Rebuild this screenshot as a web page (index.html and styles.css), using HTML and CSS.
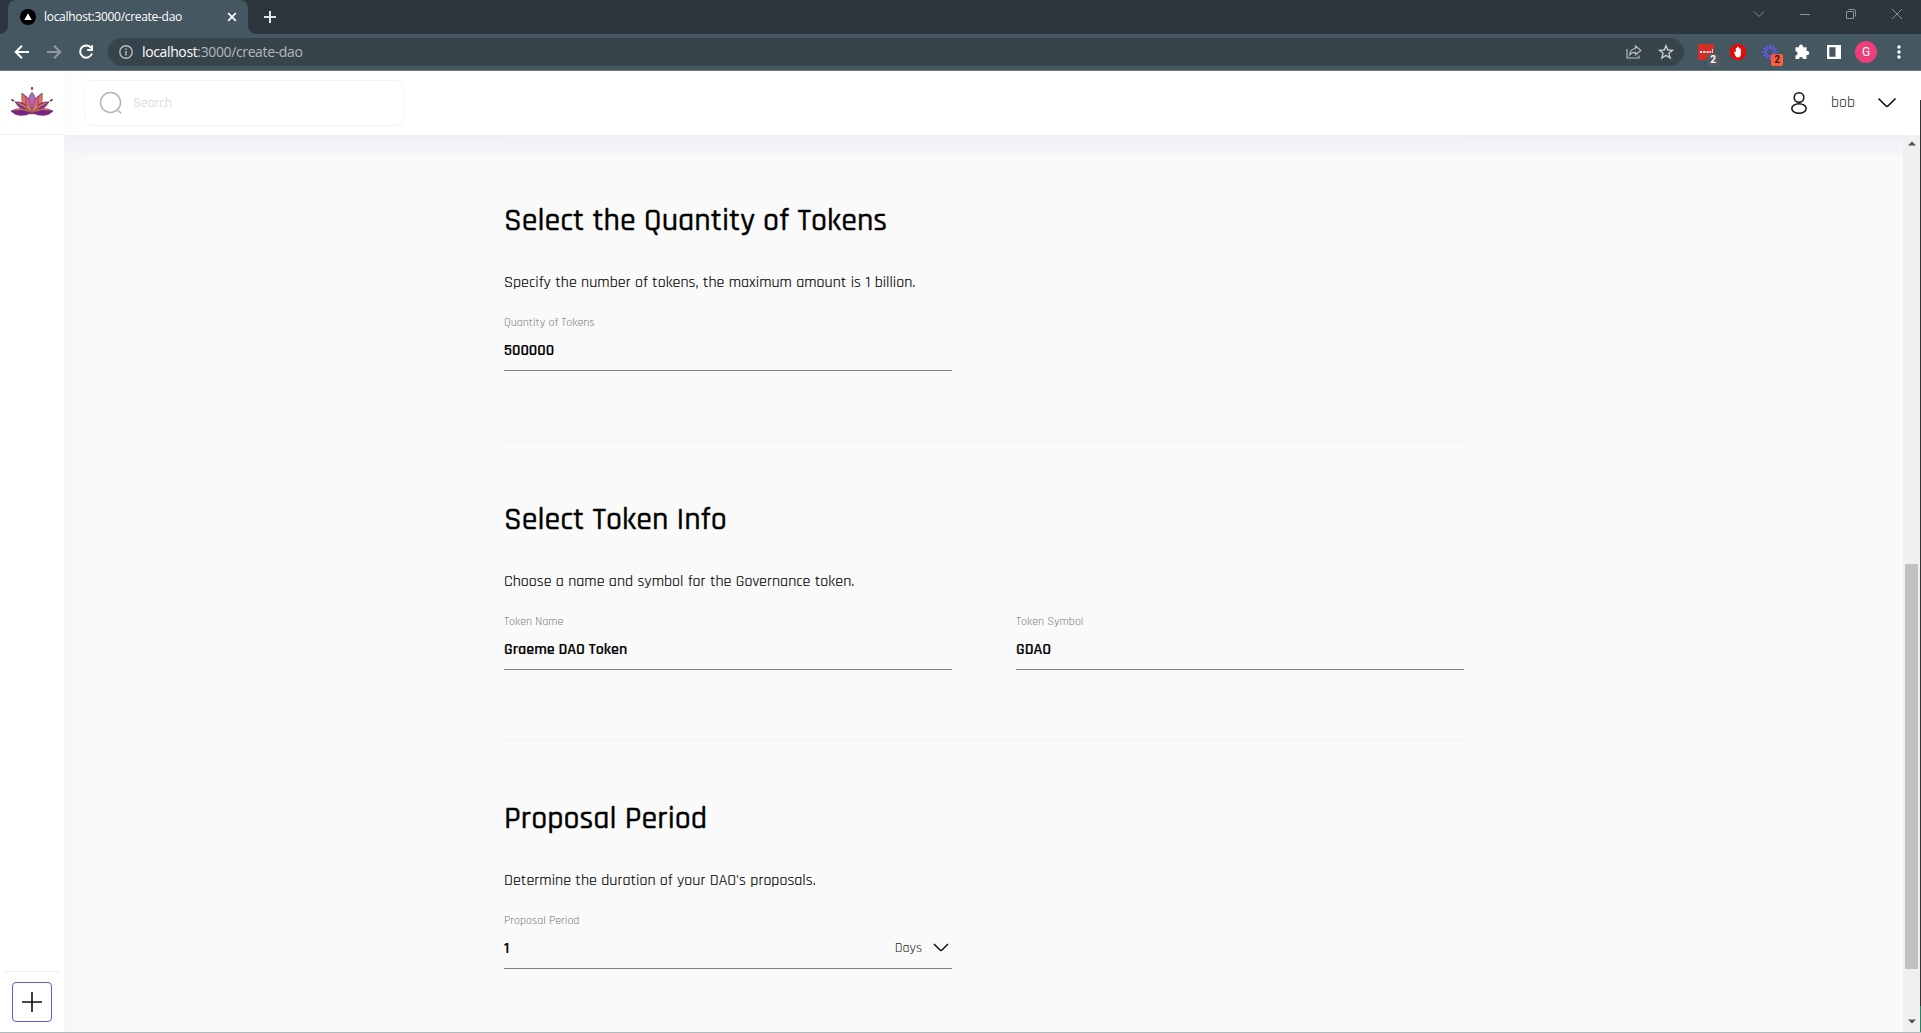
FILE: index.html
```html
<!DOCTYPE html>
<html lang="en">
<head>
<meta charset="utf-8">
<title>Create DAO</title>
<link rel="stylesheet" href="styles.css">
</head>
<body>
<div class="window">
  <div class="tabstrip">
    <div class="tab">
      <svg class="favicon" width="16" height="16" viewBox="0 0 16 16"><circle cx="8" cy="8" r="8" fill="#000"/><path d="M8 4.2 11.7 11H4.3Z" fill="#fff"/></svg>
      <span class="tab-title">localhost:3000/create-dao</span>
      <svg width="10" height="10" viewBox="0 0 10 10"><path d="M1.2 1.2 8.8 8.8M8.8 1.2 1.2 8.8" stroke="#fff" stroke-width="1.7"/></svg>
    </div>
    <svg class="new-tab" width="12" height="12" viewBox="0 0 12 12"><path d="M6 0V12M0 6H12" stroke="#e1e4e5" stroke-width="2"/></svg>
    <div class="window-controls">
      <svg width="12" height="12" viewBox="0 0 12 12"><path d="M1 3.5 6 8.5 11 3.5"/></svg>
      <svg width="12" height="12" viewBox="0 0 12 12"><path d="M1 6.5H11"/></svg>
      <svg width="12" height="12" viewBox="0 0 12 12"><path d="M1.500 3.500H8.500V10.500H1.500ZM3.500 1.500H9Q10.500 1.500 10.500 3V8.500"/></svg>
      <svg width="12" height="12" viewBox="0 0 12 12"><path d="M1 1 11 11M11 1 1 11"/></svg>
    </div>
  </div>
  <div class="toolbar">
    <div class="nav">
      <svg width="16" height="16" viewBox="0 0 16 16"><path d="M15 8H2.500M8 1.700 1.700 8 8 14.300" stroke="#fff"/></svg>
      <svg width="16" height="16" viewBox="0 0 16 16"><path d="M1 8H13.500M8 1.700 14.300 8 8 14.300" stroke="#8f9a9f"/></svg>
      <svg width="16" height="16" viewBox="0 0 16 16"><path d="M13.200 4A6.100 6.100 0 1 0 14 9.500M14 1.200V6H9.200" stroke="#fff"/></svg>
    </div>
    <div class="omnibox">
      <svg width="14" height="14" viewBox="0 0 14 14" fill="none" stroke="#b9bfc2" stroke-width="1.400"><circle cx="7" cy="7" r="6.200"/><path d="M7 6V10.500M7 3.500V5"/></svg>
      <span class="url"><b>localhost</b>:3000/create-dao</span>
      <svg class="share" width="16" height="16" viewBox="0 0 16 16" fill="none" stroke="#b9bfc2" stroke-width="1.200"><path d="M1 5V14H13V11.500M9.500 2 14.800 6.400 9.500 10.800V8.300Q5.500 8.200 3.700 11 4 5 9.500 4.500Z"/></svg>
      <svg width="16" height="16" viewBox="0 0 16 16" fill="none" stroke="#c8cdcf" stroke-width="1.400"><path d="M8 1.700 9.800 6 14.500 6.300 10.900 9.300 12.100 14 8 11.400 3.900 14 5.100 9.300 1.500 6.300 6.200 6Z"/></svg>
    </div>
    <div class="extensions">
      <span class="ext"><svg width="16" height="16" viewBox="0 0 16 16"><rect width="16" height="16" rx="1" fill="#d32d27"/><path d="M2 7H4V9H2ZM5.300 7H7.300V9H5.300ZM8.600 7H10.600V9H8.600ZM11.700 7H13.200V9H11.700ZM14.200 5H15V9H14.200Z" fill="#fff"/></svg><i class="badge badge-dark">2</i></span>
      <span class="ext"><svg width="16" height="16" viewBox="0 0 16 16"><path d="M4.700 0H11.300L16 4.700V11.300L11.300 16H4.700L0 11.300V4.700Z" fill="#e40d0d"/><path d="M4 8 5 7.500 5.800 8.500V4.200Q6.500 3.500 7 4.200V2.900Q7.600 2.200 8.200 2.900V3.600Q8.900 2.900 9.400 3.700V4.700Q10.400 4.200 10.900 5V10.500Q10.600 13.500 8 13.500 6 13.500 5.200 11.500Z" fill="#fff"/></svg></span>
      <span class="ext"><svg width="16" height="16" viewBox="0 0 16 16"><g stroke="#6259ee" stroke-width="1.500"><path d="M8 0V5M8 11V16M0 8H5M11 8H16M4 1.100 6.500 5.400M9.500 10.600 12 14.900M12 1.100 9.500 5.400M6.500 10.600 4 14.900M1.100 4 5.400 6.500M10.600 9.500 14.900 12M14.900 4 10.600 6.500M5.400 9.500 1.100 12"/></g></svg><i class="badge badge-orange">2</i></span>
      <span class="ext"><svg width="16" height="16" viewBox="0 0 16 16"><path d="M1.500 3.300H5A2.100 2.100 0 1 1 9 3.300H12.500V7A2.100 2.100 0 1 1 12.500 11V15H9A2 2 0 0 0 5 15H1.500V11.500A2 2 0 0 0 1.500 7.300Z" fill="#fff"/></svg></span>
      <span class="ext"><svg width="16" height="16" viewBox="0 0 16 16"><path d="M1 1H15V15H1ZM3.300 3.300V12.700H9.500V3.300Z" fill="#fff" fill-rule="evenodd"/></svg></span>
      <span class="avatar">G</span>
      <svg width="4" height="14" viewBox="0 0 4 14" fill="#fff"><circle cx="2" cy="2" r="1.700"/><circle cx="2" cy="7" r="1.700"/><circle cx="2" cy="12" r="1.700"/></svg>
    </div>
  </div>
  <div class="app">
    <aside class="sidebar">
      <div class="logo">
        <svg width="44" height="30" viewBox="0 0 44 30" stroke="#55305d" stroke-width=".4">
          <path d="M22 27Q10 20 12 6 21 11 22 27ZM22 27Q34 20 32 6 23 11 22 27Z" fill="#a84f95"/>
          <path d="M12 6Q19 13 18 22L12 17ZM32 6Q25 13 26 22L32 17Z" fill="#ee735d"/>
          <path d="M22 27Q13 15 22 5 31 15 22 27Z" fill="#a96bb3"/>
          <path d="M22 27Q13 17 16 9 22 16 22 27ZM22 27Q31 17 28 9 22 16 22 27Z" fill="#d4607c"/>
          <path d="M22 27Q10 24 5 15 16 13 22 27ZM22 27Q34 24 39 15 28 13 22 27Z" fill="#853799"/>
          <path d="M22 27Q15 15 5 15L14 20ZM22 27Q29 15 39 15L30 20Z" fill="#f07a55"/>
          <path d="M22 26Q8 32 1 24 12 19 22 26ZM22 26Q36 32 43 24 32 19 22 26Z" fill="#792588"/>
          <path d="M22 26Q12 18 1 24L12 23ZM22 26Q32 18 43 24L32 23Z" fill="#f4774f"/>
          <path d="M22 27Q17 20 15 17 21 18 22 27ZM22 27Q27 20 29 17 23 18 22 27Z" fill="#f39a52"/>
          <path d="M22 0V3M1.500 12.500 4 14.200M42.500 12.500 40 14.200" stroke="#6b3350" stroke-width="1.600"/>
        </svg>
      </div>
      <div class="sidebar-foot">
        <div class="add"><svg width="20" height="20" viewBox="0 0 20 20"><path d="M10 0V20M0 10H20" stroke="#111" stroke-width="1.600"/></svg></div>
      </div>
    </aside>
    <div class="page">
      <header class="header">
        <div class="search">
          <svg width="24" height="24" viewBox="0 0 24 24" fill="none" stroke="#b3b3b3" stroke-width="1.500"><circle cx="11.500" cy="11.500" r="10"/><path d="M19 19.500 22 22.300"/></svg>
          <span>Search</span>
        </div>
        <div class="account">
          <svg width="18" height="24" viewBox="0 0 18 24" fill="none" stroke="#111" stroke-width="1.500"><circle cx="9" cy="6.500" r="4.800"/><ellipse cx="9" cy="17.500" rx="7.200" ry="4.700"/></svg>
          <span class="username">bob</span>
          <svg width="20" height="12" viewBox="0 0 20 12" fill="none" stroke="#111" stroke-width="1.600"><path d="M1.500 1.500 8.800 8.800Q10 10 11.200 8.800L18.500 1.500"/></svg>
        </div>
      </header>
      <div class="scroller">
        <main class="content">
          <section>
            <h2>Select the Quantity of Tokens</h2>
            <p>Specify the number of tokens, the maximum amount is 1 billion.</p>
            <div class="fields">
              <div class="field"><label>Quantity of Tokens</label><div class="value">500000</div></div>
            </div>
          </section>
          <section>
            <h2>Select Token Info</h2>
            <p>Choose a name and symbol for the Governance token.</p>
            <div class="fields">
              <div class="field"><label>Token Name</label><div class="value">Graeme DAO Token</div></div>
              <div class="field"><label>Token Symbol</label><div class="value">GDAO</div></div>
            </div>
          </section>
          <section>
            <h2>Proposal Period</h2>
            <p>Determine the duration of your DAO's proposals.</p>
            <div class="fields">
              <div class="field"><label>Proposal Period</label><div class="value"><span>1</span>
                <div class="unit"><span>Days</span><svg width="16" height="10" viewBox="0 0 16 10" fill="none" stroke="#111" stroke-width="1.500"><path d="M1 1 7 7Q8 8 9 7L15 1"/></svg></div></div></div>
            </div>
          </section>
        </main>
        <div class="scrollbar">
          <svg width="8" height="5" viewBox="0 0 8 5"><path d="M0 4.500 4 .5 8 4.500Z" fill="#505050"/></svg>
          <div class="thumb"></div>
          <svg width="8" height="5" viewBox="0 0 8 5"><path d="M0 .5 4 4.500 8 .5Z" fill="#505050"/></svg>
        </div>
      </div>
    </div>
    <div class="edge"></div>
  </div>
</div>
</body>
</html>
```
FILE: styles.css
```css
* { box-sizing: border-box; }
body { margin: 0; background: #fafafa; font-family: Rajdhani, Roboto, "Liberation Sans", sans-serif; color: #000; }
svg { display: block; flex: none; }
.window { width: 1921px; height: 1033px; display: flex; flex-direction: column; overflow: hidden; border-bottom: 1px solid #aeb9bd; }

.tabstrip { height: 34px; flex: none; display: flex; align-items: center; background: #2c373d; padding-left: 8px; }
.tab { position: relative; width: 240px; height: 34px; display: flex; align-items: center; padding: 0 11px 0 12px; background: #455760; border-radius: 8px 8px 0 0; color: #fff; }
.tab::before, .tab::after { content: ""; position: absolute; bottom: 0; width: 8px; height: 8px; }
.tab::before { left: -8px; background: radial-gradient(circle at 0 0, #2c373d 7.500px, #455760 8px); }
.tab::after { right: -8px; background: radial-gradient(circle at 100% 0, #2c373d 7.500px, #455760 8px); }
.tab-title { font: 12px/16px "Open Sans", sans-serif; letter-spacing: -.3px; margin: 0 auto 0 8px; white-space: nowrap; }
.new-tab { margin-left: 16px; }
.window-controls { margin-left: auto; display: flex; gap: 34px; padding: 0 18px 6px 0; }
.window-controls svg { fill: none; stroke: #8a9296; stroke-width: 1; }

.toolbar { height: 37px; flex: none; display: flex; align-items: center; background: #455760; border-bottom: 1px solid #6d7b83; padding-left: 14px; }
.nav { display: flex; gap: 16px; width: 94px; }
.nav svg { fill: none; stroke-width: 2; }
.omnibox { width: 1576px; height: 28px; border-radius: 14px; background: #38444b; display: flex; align-items: center; padding: 0 10px 0 11px; }
.url { margin-left: 9px; font: 14px/20px "Open Sans", sans-serif; letter-spacing: -.37px; color: #b0b8bb; white-space: nowrap; }
.url b { font-weight: 400; color: #fff; }
.share { margin: 0 16px 0 auto; }
.extensions { display: flex; align-items: center; margin-left: 14px; }
.ext { position: relative; margin-right: 16px; }
.badge { position: absolute; left: 9px; top: 10px; width: 12px; height: 12px; border-radius: 2px; font: bold 10px/12px Roboto, sans-serif; text-align: center; }
.badge-dark { background: #555b60; color: #fff; }
.badge-orange { background: #ff5c3e; color: #222; }
.avatar { width: 22px; height: 22px; border-radius: 50%; background: #ec407a; color: #fff; font: 12px/22px Roboto, sans-serif; text-align: center; margin: 0 20px 0 -3px; }

.app { flex: 1; display: flex; min-height: 0; }
.sidebar { width: 64px; flex: none; display: flex; flex-direction: column; justify-content: space-between; background: #fff; }
.logo { height: 64px; display: flex; justify-content: center; padding-top: 16px; border-bottom: 1px solid #efeff1; }
.sidebar-foot { height: 61px; margin: 0 4px; padding: 10px 8px 0; border-top: 1px solid #ededed; }
.add { width: 40px; height: 40px; border: 1px solid #6b57d2; border-radius: 4px; display: flex; align-items: center; justify-content: center; }

.page { flex: 1; min-width: 0; display: flex; flex-direction: column; }
.header { height: 64px; flex: none; display: flex; align-items: center; justify-content: space-between; padding: 0 23px 0 20px; background: linear-gradient(90deg, #fbfbfe, #fff 20px); }
.search { width: 320px; height: 46px; border: 1px solid #f4f4f4; border-radius: 8px; display: flex; align-items: center; padding-left: 14px; font-size: 14px; font-weight: 500; color: #dcdcdc; background: #fff; }
.search span { margin-left: 10px; }
.account { display: flex; align-items: center; color: #222; font-size: 16px; }
.username { margin: -1px 22px 0 23px; }

.scroller { flex: 1; min-height: 0; display: flex; justify-content: space-between; background: linear-gradient(#eeeef6, #fafafa00 24px), linear-gradient(90deg, #f6f6f9, #fafafa 28px); }
.content { width: 960px; margin: 7px 0 0 440px; overflow: hidden; }
section { height: 299px; border-top: 1px solid #f0f0f0; padding-top: 58px; }
h2 { margin: 0; font-size: 32px; font-weight: 500; line-height: 40px; white-space: nowrap; -webkit-text-stroke: .35px #000; }
p { margin: 30px 0 0; font-size: 16px; line-height: 24px; letter-spacing: .02px; white-space: nowrap; -webkit-text-stroke: .15px #000; }
.fields { display: flex; gap: 64px; margin-top: 18px; }
.field { width: 448px; border-bottom: 1px solid #858585; height: 58px; }
label { display: block; padding-top: 1px; font-size: 12px; line-height: 18px; color: #777; }
.value { display: flex; align-items: center; justify-content: space-between; margin-top: 8px; height: 22px; font-size: 16px; font-weight: 600; line-height: 22px; color: #000; -webkit-text-stroke: .15px #000; }
.unit { display: flex; align-items: center; gap: 11px; margin-top: -2px; padding-right: 3px; font-size: 14px; font-weight: 400; color: #222; -webkit-text-stroke: 0; }
.unit span { margin-top: -1px; }
.scrollbar { width: 17px; background: #f0f0f0; display: flex; flex-direction: column; align-items: center; padding: 6px 0 8px; }
.thumb { width: 13px; height: 405px; margin: 418px 0 auto; background: #c1c1c1; }
.edge { width: 1px; flex: none; background: linear-gradient(#fff 29px, #333 29px, #333 935px, #168a62 935px); }
```
